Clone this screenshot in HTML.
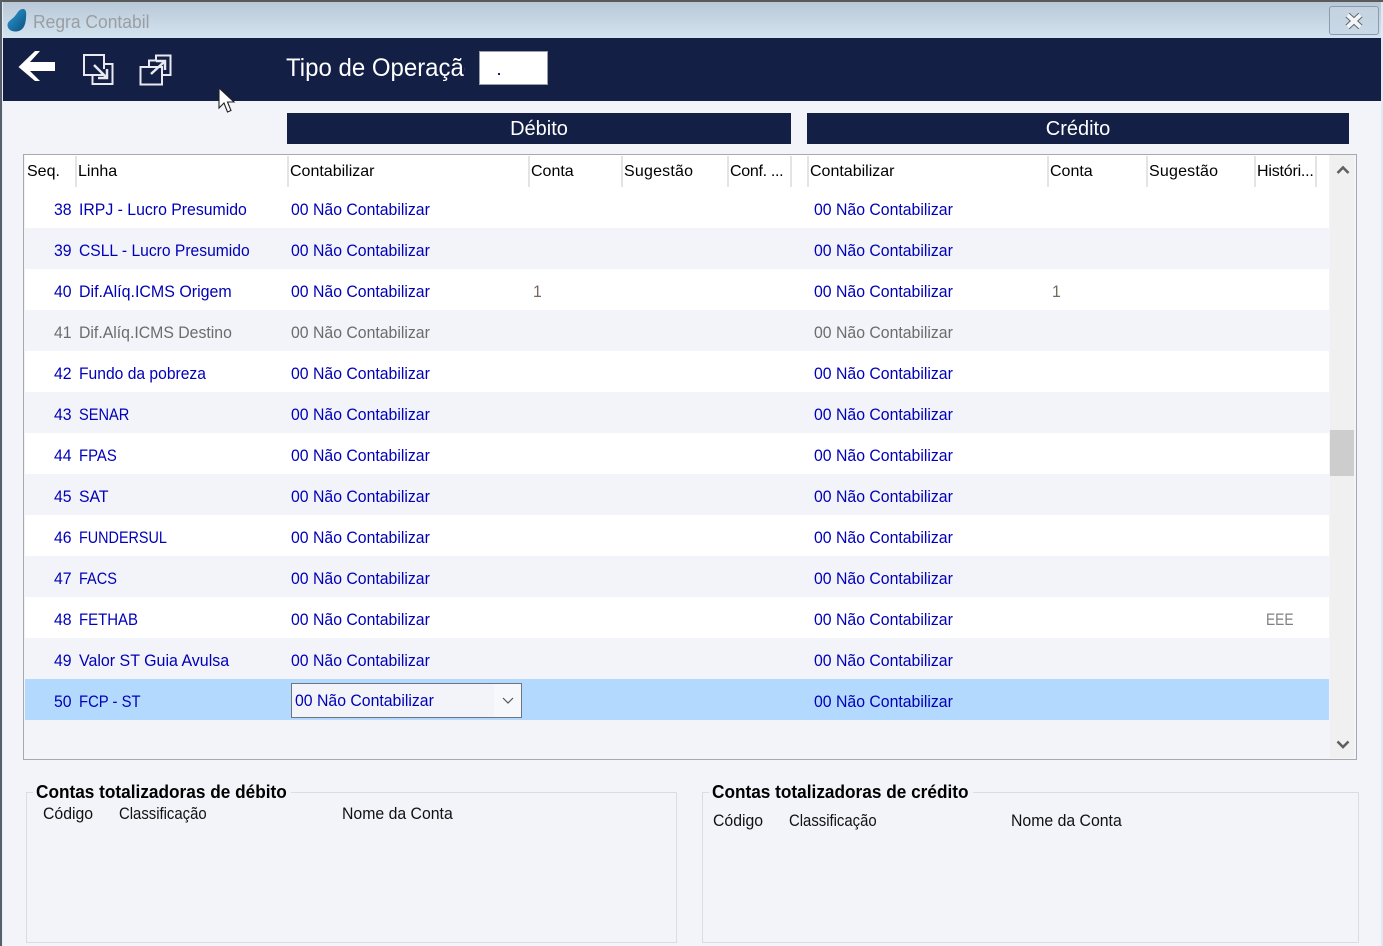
<!DOCTYPE html>
<html><head><meta charset="utf-8"><title>Regra Contabil</title>
<style>
html,body{margin:0;padding:0;width:1383px;height:946px;overflow:hidden;background:#f2f4f9;font-family:"Liberation Sans",sans-serif}
div,span{position:absolute;box-sizing:border-box}
.t{white-space:nowrap;font-size:17px;line-height:20px;margin-top:1px;transform:scaleX(.93);transform-origin:left center;color:#0000b8}
.h{white-space:nowrap;font-size:16px;line-height:20px;top:163px;margin-top:-1.500px;color:#000}
.s{width:2px;top:156px;height:31px;background:#e4e4e4}
.r{left:25px;width:1304px;height:41px}
.w{background:#fff}
.g{color:#6c6c6c}
.k{color:#111}
.b{font-weight:bold;color:#000;font-size:18px;transform:scaleX(.957)}
</style></head><body>
<div style="left:0;top:0;width:1383px;height:2px;background:#5a5a5a"></div>
<div style="left:0;top:2px;width:1383px;height:36px;background:linear-gradient(#b9c8d6,#d4e3f0)"></div>
<div style="left:0;top:0;width:2px;height:946px;background:#55606a"></div>
<div style="left:2px;top:2px;width:1px;height:944px;background:#e8eef5"></div>
<div style="left:1381px;top:2px;width:2px;height:944px;background:#dfe8f3"></div>
<svg style="position:absolute;left:6px;top:7px" width="22" height="26" viewBox="0 0 22 26"><defs><linearGradient id="a" x1="0" y1="0" x2="1" y2="1"><stop offset="0" stop-color="#2f9bd0"/><stop offset="1" stop-color="#0a4f80"/></linearGradient></defs><path d="M1.500 18C1.500 14 6 12.500 9 9C11.500 6 13 2 17 2C20.500 2 20.500 7 20 11C19.500 17 18 24 10 24.500C5 24.800 1.500 22 1.500 18Z" fill="url(#a)"/></svg>
<div style="left:33px;top:11px;font-size:18px;line-height:22px;color:#9a9ea3;white-space:nowrap;transform:scaleX(.97);transform-origin:left center">Regra Contabil</div>
<div style="left:1329px;top:6px;width:50px;height:29px;border:1px solid #8b9cb0;border-radius:3px;background:linear-gradient(#c5d2df,#c8d8e6)"></div>
<svg style="position:absolute;left:1344px;top:12px" width="20" height="18" viewBox="0 0 20 18"><path d="M3.500 3L16.500 15M16.500 3L3.500 15" stroke="#5d6670" stroke-width="6"/><path d="M3.500 3L16.500 15M16.500 3L3.500 15" stroke="#f4f5f6" stroke-width="4"/></svg>

<div style="left:3px;top:38px;width:1378px;height:63px;background:#131f45"></div>
<svg style="position:absolute;left:18px;top:50px" width="38" height="32" viewBox="0 0 38 32"><path d="M0.500 17L17 1H22L12 12H37V21H12L22 31H17Z" fill="#fff"/></svg>
<svg style="position:absolute;left:82px;top:53px" width="34" height="34" viewBox="0 0 34 34" fill="none" stroke="#e8eaf0" stroke-width="2"><path d="M21 22H2V2H22V16"/><path d="M23 11H30.500V31H10.500V23"/><path d="M12 12L24 24" stroke-width="2.500"/><path d="M16 25H25V16" stroke-width="2.500"/></svg>
<svg style="position:absolute;left:138px;top:53px" width="36" height="34" viewBox="0 0 36 34" fill="none" stroke="#e8eaf0" stroke-width="2"><path d="M2.500 14H24V31.500H2.500Z"/><path d="M11 13V7.500H17M11 7.500H18V2.500H32.500V22H25"/><path d="M13 21L26 9" stroke-width="2.500"/><path d="M18 8H27V17" stroke-width="2.500"/></svg>
<div style="left:286px;top:52px;width:179px;height:34px;overflow:hidden"><span style="left:0;top:0;font-size:25px;line-height:33px;color:#fff;white-space:nowrap;transform:scaleX(.96);transform-origin:left center">Tipo de Operação</span></div>
<div style="left:479px;top:51px;width:69px;height:34px;background:#fff;border:1px solid #9a9ea8"></div>
<div style="left:498px;top:73px;width:2px;height:2px;background:#131f7a"></div>

<svg style="position:absolute;left:217px;top:87px;z-index:5" width="20" height="28" viewBox="0 0 20 28"><path d="M2 1V21L7 16L10.500 25L14 23.500L10.500 15H17Z" fill="#fff" stroke="#222" stroke-width="1.100"/></svg>

<div style="left:287px;top:113px;width:504px;height:31px;background:#131f45;color:#fff;font-size:20px;line-height:33px;text-align:center">Débito</div>
<div style="left:807px;top:113px;width:542px;height:31px;background:#131f45;color:#fff;font-size:20px;line-height:33px;text-align:center">Crédito</div>

<div style="left:23px;top:154px;width:1334px;height:606px;border:1px solid #a9a9ad"></div>
<div style="left:25px;top:155px;width:1304px;height:32px;background:#fff"></div>
<div style="left:1330px;top:155px;width:24px;height:603px;background:#f0f0f0"></div>
<div style="left:1330px;top:430px;width:24px;height:46px;background:#cdcdcd"></div>
<svg style="position:absolute;left:1336px;top:164px" width="14" height="12" viewBox="0 0 14 12"><path d="M1.500 9L7 3.500L12.500 9" fill="none" stroke="#606060" stroke-width="2.600"/></svg>
<svg style="position:absolute;left:1336px;top:739px" width="14" height="12" viewBox="0 0 14 12"><path d="M1.500 2.500L7 8L12.500 2.500" fill="none" stroke="#606060" stroke-width="2.600"/></svg>

<span class="s" style="left:75px"></span><span class="s" style="left:287px"></span><span class="s" style="left:528px"></span><span class="s" style="left:621px"></span><span class="s" style="left:727px"></span><span class="s" style="left:790px"></span><span class="s" style="left:807px"></span><span class="s" style="left:1047px"></span><span class="s" style="left:1146px"></span><span class="s" style="left:1254px"></span><span class="s" style="left:1315px"></span>
<span class="h" style="left:27px">Seq.</span><span class="h" style="left:78px">Linha</span><span class="h" style="left:290px">Contabilizar</span><span class="h" style="left:531px">Conta</span><span class="h" style="left:624px;letter-spacing:.2px">Sugestão</span><span class="h" style="left:730px;letter-spacing:-.3px">Conf. ...</span><span class="h" style="left:810px">Contabilizar</span><span class="h" style="left:1050px">Conta</span><span class="h" style="left:1149px;letter-spacing:.2px">Sugestão</span><span class="h" style="left:1257px;letter-spacing:-.2px">Históri...</span>

<div class="r w" style="top:187px"></div>
<div class="r w" style="top:269px"></div>
<div class="r w" style="top:351px"></div>
<div class="r w" style="top:433px"></div>
<div class="r w" style="top:515px"></div>
<div class="r w" style="top:597px"></div>
<div class="r" style="top:679px;background:#b3d9ff"></div>

<span class="t" style="left:54px;top:199px">38</span><span class="t" style="left:79px;top:199px">IRPJ - Lucro Presumido</span><span class="t" style="left:291px;top:199px">00 Não Contabilizar</span><span class="t" style="left:814px;top:199px">00 Não Contabilizar</span>
<span class="t" style="left:54px;top:240px">39</span><span class="t" style="left:79px;top:240px;transform:scaleX(.92)">CSLL - Lucro Presumido</span><span class="t" style="left:291px;top:240px">00 Não Contabilizar</span><span class="t" style="left:814px;top:240px">00 Não Contabilizar</span>
<span class="t" style="left:54px;top:281px">40</span><span class="t" style="left:79px;top:281px;transform:scaleX(.94)">Dif.Alíq.ICMS Origem</span><span class="t" style="left:291px;top:281px">00 Não Contabilizar</span><span class="t" style="left:533px;top:281px;color:#7a6660">1</span><span class="t" style="left:814px;top:281px">00 Não Contabilizar</span><span class="t" style="left:1052px;top:281px;color:#66705c">1</span>
<span class="t g" style="left:54px;top:322px">41</span><span class="t g" style="left:79px;top:322px">Dif.Alíq.ICMS Destino</span><span class="t g" style="left:291px;top:322px">00 Não Contabilizar</span><span class="t g" style="left:814px;top:322px">00 Não Contabilizar</span>
<span class="t" style="left:54px;top:363px">42</span><span class="t" style="left:79px;top:363px;transform:scaleX(.92)">Fundo da pobreza</span><span class="t" style="left:291px;top:363px">00 Não Contabilizar</span><span class="t" style="left:814px;top:363px">00 Não Contabilizar</span>
<span class="t" style="left:54px;top:404px">43</span><span class="t" style="left:79px;top:404px;transform:scaleX(.86)">SENAR</span><span class="t" style="left:291px;top:404px">00 Não Contabilizar</span><span class="t" style="left:814px;top:404px">00 Não Contabilizar</span>
<span class="t" style="left:54px;top:445px">44</span><span class="t" style="left:79px;top:445px;transform:scaleX(.875)">FPAS</span><span class="t" style="left:291px;top:445px">00 Não Contabilizar</span><span class="t" style="left:814px;top:445px">00 Não Contabilizar</span>
<span class="t" style="left:54px;top:486px">45</span><span class="t" style="left:79px;top:486px">SAT</span><span class="t" style="left:291px;top:486px">00 Não Contabilizar</span><span class="t" style="left:814px;top:486px">00 Não Contabilizar</span>
<span class="t" style="left:54px;top:527px">46</span><span class="t" style="left:79px;top:527px;transform:scaleX(.846)">FUNDERSUL</span><span class="t" style="left:291px;top:527px">00 Não Contabilizar</span><span class="t" style="left:814px;top:527px">00 Não Contabilizar</span>
<span class="t" style="left:54px;top:568px">47</span><span class="t" style="left:79px;top:568px;transform:scaleX(.853)">FACS</span><span class="t" style="left:291px;top:568px">00 Não Contabilizar</span><span class="t" style="left:814px;top:568px">00 Não Contabilizar</span>
<span class="t" style="left:54px;top:609px">48</span><span class="t" style="left:79px;top:609px;transform:scaleX(.88)">FETHAB</span><span class="t" style="left:291px;top:609px">00 Não Contabilizar</span><span class="t" style="left:814px;top:609px">00 Não Contabilizar</span><span class="t" style="left:1266px;top:609px;color:#808080;transform:scaleX(.81)">EEE</span>
<span class="t" style="left:54px;top:650px">49</span><span class="t" style="left:79px;top:650px;transform:scaleX(.94)">Valor ST Guia Avulsa</span><span class="t" style="left:291px;top:650px">00 Não Contabilizar</span><span class="t" style="left:814px;top:650px">00 Não Contabilizar</span>
<span class="t" style="left:54px;top:691px">50</span><span class="t" style="left:79px;top:691px;transform:scaleX(.873)">FCP - ST</span>
<div style="left:291px;top:683px;width:231px;height:35px;background:#f2f4f9;border:1px solid #6d7680"></div>
<div style="left:494px;top:684px;width:27px;height:33px;background:#f7f8fb"></div>
<svg style="position:absolute;left:501px;top:696px" width="14" height="10" viewBox="0 0 14 10"><path d="M2 2L7 7L12 2" fill="none" stroke="#555" stroke-width="1.200"/></svg>
<span class="t" style="left:295px;top:689.500px">00 Não Contabilizar</span>
<span class="t" style="left:814px;top:691px">00 Não Contabilizar</span>

<div style="left:26px;top:792px;width:651px;height:151px;border:1px solid #dcdcdc"></div>
<div style="left:702px;top:792px;width:657px;height:151px;border:1px solid #dcdcdc"></div>
<div style="left:33px;top:784px;width:258px;height:16px;background:#f2f4f9"></div>
<div style="left:709px;top:784px;width:264px;height:16px;background:#f2f4f9"></div>
<span class="t b" style="left:36px;top:781px">Contas totalizadoras de débito</span>
<span class="t b" style="left:712px;top:781px">Contas totalizadoras de crédito</span>
<span class="t k" style="left:43px;top:803px">Código</span><span class="t k" style="left:119px;top:803px;transform:scaleX(.875)">Classificação</span><span class="t k" style="left:342px;top:803px">Nome da Conta</span>
<span class="t k" style="left:713px;top:810px">Código</span><span class="t k" style="left:789px;top:810px;transform:scaleX(.875)">Classificação</span><span class="t k" style="left:1011px;top:810px">Nome da Conta</span>
</body></html>
